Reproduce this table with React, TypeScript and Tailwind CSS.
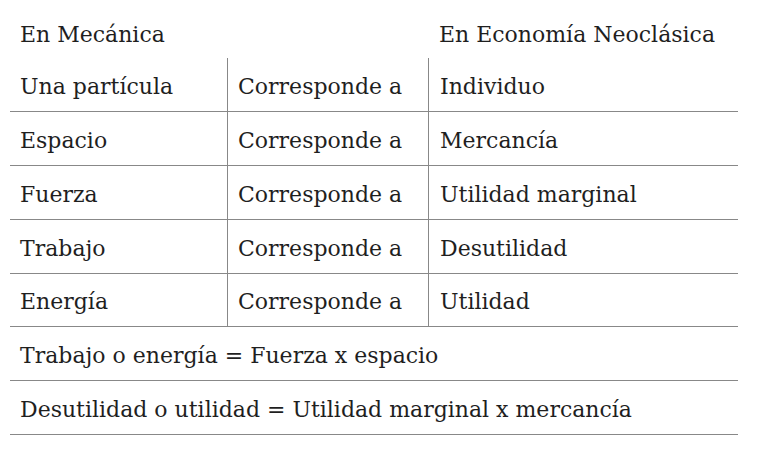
import React from "react";

const rows = [
  ["Una partícula", "Individuo"],
  ["Espacio", "Mercancía"],
  ["Fuerza", "Utilidad marginal"],
  ["Trabajo", "Desutilidad"],
  ["Energía", "Utilidad"],
];

export default function App() {
  return (
    <div
      className="w-[758px] h-[454px] bg-white pl-[10px] pr-[20px] text-[22px] text-[#1f1f1f]"
      style={{ fontFamily: '"DejaVu Serif", serif' }}
    >
      <div className="flex h-[58px] items-center">
        <div className="w-[217px] pl-[10px] pt-[10px]">En Mecánica</div>
        <div className="w-[201px]" />
        <div className="flex-1 pl-[11px] pt-[10px]">En Economía Neoclásica</div>
      </div>
      {rows.map(([a, b], i) => (
        <div
          key={a}
          className={`flex border-b border-[#888] ${i === 4 ? "h-[53px]" : "h-[54px]"}`}
        >
          <div className="w-[217px] pl-[10px] pt-[3px] flex items-center">{a}</div>
          <div className="w-[201px] pl-[10px] pt-[3px] flex items-center border-l border-[#888]">
            Corresponde a
          </div>
          <div className="flex-1 pl-[11px] pt-[3px] flex items-center border-l border-[#888]">{b}</div>
        </div>
      ))}
      <div className="h-[54px] border-b border-[#888] pl-[10px] pt-[3px] flex items-center">
        Trabajo o energía = Fuerza x espacio
      </div>
      <div className="h-[54px] border-b border-[#888] pl-[10px] pt-[3px] flex items-center">
        Desutilidad o utilidad = Utilidad marginal x mercancía
      </div>
    </div>
  );
}
